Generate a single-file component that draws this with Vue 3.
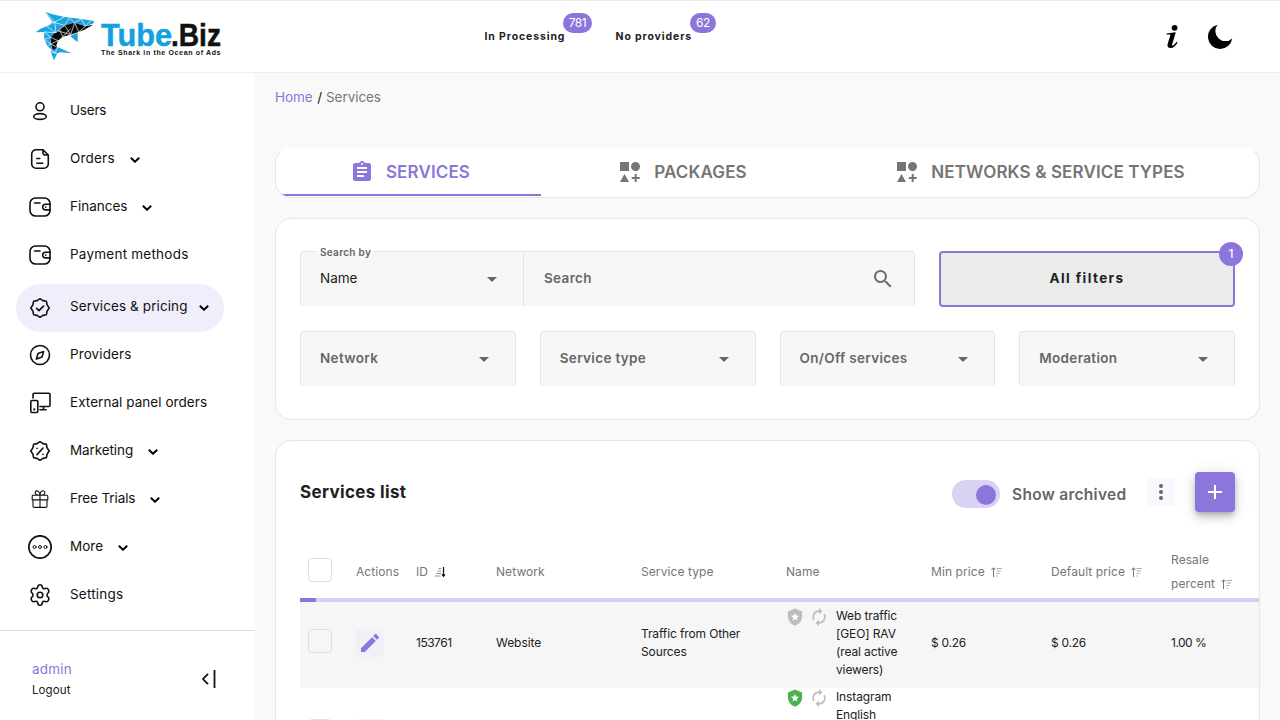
<script setup>
const nav = [
  { label: 'Users', icon: 'user', cls: 'n-users' },
  { label: 'Orders', icon: 'doc', more: true, cls: 'n-orders' },
  { label: 'Finances', icon: 'wallet', more: true, cls: 'n-fin' },
  { label: 'Payment methods', icon: 'wallet', cls: 'n-pay' },
  { label: 'Services & pricing', icon: 'check', more: true, active: true, cls: 'n-serv' },
  { label: 'Providers', icon: 'compass', cls: 'n-prov' },
  { label: 'External panel orders', icon: 'devices', cls: 'n-ext' },
  { label: 'Marketing', icon: 'percent', more: true, cls: 'n-mark' },
  { label: 'Free Trials', icon: 'gift', more: true, cls: 'n-free' },
  { label: 'More', icon: 'dots', more: true, cls: 'n-more' },
  { label: 'Settings', icon: 'gear', cls: 'n-set' },
]
const filters = ['Network', 'Service type', 'On/Off services', 'Moderation']
const columns = [
  { label: 'Actions' },
  { label: 'ID', sort: 'desc' },
  { label: 'Network' },
  { label: 'Service type' },
  { label: 'Name' },
  { label: 'Min price', sort: 'asc' },
  { label: 'Default price', sort: 'asc' },
  { label: 'Resale percent', sort: 'asc' },
]
const rows = [
  { id: '153761', network: 'Website', type: 'Traffic from Other Sources', name: ['Web traffic', '[GEO] RAV', '(real active', 'viewers)'], min: '$ 0.26', def: '$ 0.26', resale: '1.00 %', ok: false },
  { id: '', network: '', type: '', name: ['Instagram', 'English', '', '', ''], min: '', def: '', resale: '', ok: true },
]
const badge = 'M12 2.700L14.900 4.600L18.400 5.300L19.100 8.900L21.200 12L19.100 15.100L18.400 18.700L14.900 19.400L12 21.300L9.100 19.400L5.600 18.700L4.900 15.100L2.800 12L4.900 8.900L5.600 5.300L9.100 4.600Z'
</script>

<template>
  <div class="page">
    <header class="top">
      <svg class="logo" viewBox="0 0 200 60" width="200" height="60">
        <g transform="translate(-16 -4) scale(.33333)">
          <g fill="#1ba3e2">
            <path d="M75 36L98 43L133 51L180 56L222 63L221 70L196 79L164 68L134 76L108 98L92 112L92 132L97 151L82 138L73 118L72 96L47 97L62 86L80 79L98 66Z" />
            <path d="M96 149L114 142L155 160L121 157L112 160L102 181L92 156Z" />
            <path d="M150 108L173 98L173 127Z" />
          </g>
          <path fill="#0a0a0a" d="M98 106L112 92L134 76L164 68L196 79L220 74L192 90L156 103L128 110L114 122L109 136L112 143L98 150L93 132L92 112Z" />
          <path stroke="#fff" stroke-width="2" fill="none" d="M76 37L104 66L133 51M98 66L134 76L148 54M104 66L80 79L108 98L104 66M134 76L108 98L72 96L92 112L73 118L92 132L82 138M164 68L148 54M164 68L184 57L196 79L212 62M134 76L152 104L164 68L176 96L196 79M118 88L128 110M92 112L114 122L93 132L112 143M96 149L104 160L114 142M92 156L112 160M152 104L112 92M152 86L128 110" />
        </g>
        <g class="brand" font-size="32" stroke-width=".5">
          <text x="65" y="42" fill="#12a0e0" stroke="#12a0e0" textLength="71" lengthAdjust="spacingAndGlyphs">Tube</text>
          <text x="135" y="42" fill="#111" stroke="#111" textLength="50" lengthAdjust="spacingAndGlyphs">.Biz</text>
        </g>
        <text x="65" y="51.300" font-size="7" class="brand" fill="#111" textLength="119.500">The Shark in the Ocean of Ads</text>
      </svg>
      <div class="stat s1"><span>In Processing</span><b>781</b></div>
      <div class="stat s2"><span>No providers</span><b>62</b></div>
      <div class="tools">
        <svg viewBox="0 0 16 26" width="16" height="26"><circle cx="9.600" cy="3.800" r="2.900" /><path d="M1.500 9.400L10.800 8.200 7.200 20.200c-.4 1.500.5 1.700 1.600.8l3-3.200.8.7c-2 3.600-4.400 5.500-7 5.500-2.700 0-3.700-1.700-2.900-4.300L5.300 11.500c.3-1-.2-1.200-1.300-1.100l-2.600.2z" /></svg>
        <svg viewBox="0 0 26 26" width="26" height="26"><path d="M10.600.8A12.200 12.200 0 1 0 25.200 14.400 10 10 0 0 1 10.600.8z" /></svg>
      </div>
    </header>

    <div class="body">
      <aside>
        <nav>
          <a v-for="n in nav" :key="n.label" :class="['item', n.cls, { active: n.active }]">
            <svg class="ni" viewBox="0 0 24 24" width="24" height="24" fill="none" stroke="#111" stroke-width="1.600" stroke-linecap="round" stroke-linejoin="round">
              <template v-if="n.icon === 'user'"><circle cx="12" cy="7.800" r="4" /><ellipse cx="12" cy="17.500" rx="6.300" ry="2.900" /></template>
              <template v-else-if="n.icon === 'doc'"><path d="M15 2.700H8A4.300 4.300 0 0 0 3.700 7v10A4.300 4.300 0 0 0 8 21.300h8a4.300 4.300 0 0 0 4.300-4.300V8L15 2.700zM15 3v2.700A2.300 2.300 0 0 0 17.300 8h2.800M8.800 11.500h3M8.800 16.300h6" /></template>
              <template v-else-if="n.icon === 'wallet'"><rect x="2" y="3" width="20" height="18" rx="5.500" /><path d="M6.500 8H12M22 9.300h-4.500a2.800 2.800 0 0 0 0 5.600H22M17.600 12.100h.2" /></template>
              <template v-else-if="n.icon === 'check'"><path :d="badge" /><path d="M8.600 12.300l2.400 2.300 4.500-4.500" /></template>
              <template v-else-if="n.icon === 'compass'"><circle cx="12" cy="12" r="9.500" /><path d="M15.600 8.500l-1.500 5.400-5.700 2.200 1.600-5.600z" /></template>
              <template v-else-if="n.icon === 'devices'"><path d="M5 7V3.500A1.200 1.200 0 0 1 6.200 2.300h14.600A1.200 1.200 0 0 1 22 3.500v10.800a1.200 1.200 0 0 1-1.200 1.200H12M15.500 15.500v3.300M12 18.800h6" /><rect x="2.800" y="9.500" width="7" height="12" rx="1" /><path d="M6.300 18.300v.1" stroke-width="2.200" /></template>
              <template v-else-if="n.icon === 'percent'"><path :d="badge" /><path d="M15 9l-6 6.600M9 9.300v.1M15 15.300v.1" /></template>
              <g v-else-if="n.icon === 'gift'" stroke-width="1.100"><path d="M5 8.300h14a.8.8 0 0 1 .8.800v3.800H4.200V9.100A.8.800 0 0 1 5 8.300zM5 12.900h14v6.300a1.200 1.200 0 0 1-1.200 1.200H6.200A1.200 1.200 0 0 1 5 19.200zM12 8.300v12M12 8.300C8.500 8.300 6.500 7 7.300 5c1-2 4.500-1.300 4.700 3.300 0-5 3.700-5.300 4.700-3.300.8 2-1.200 3.300-4.700 3.300" /></g>
              <template v-else-if="n.icon === 'dots'"><circle cx="12" cy="12" r="11.200" stroke-width="1.700" /><g stroke-width="1"><circle cx="6.500" cy="12" r="1.500" /><circle cx="12" cy="12" r="1.500" /><circle cx="17.500" cy="12" r="1.500" /></g></template>
              <template v-else><path d="M9.800 3.900a2.200 2.200 0 0 1 4.400 0c.2 1.500 1.500 2.200 3 1.600 1.200-.5 2.400-.2 3 .8l.5 1c.6 1.100.2 2-.8 2.800-1.200 1-1.200 2.800 0 3.800 1 .8 1.400 1.700.8 2.800l-.5 1c-.6 1-1.800 1.300-3 .8-1.500-.6-2.800.1-3 1.600a2.200 2.200 0 0 1-4.400 0c-.2-1.500-1.500-2.200-3-1.600-1.200.5-2.400.2-3-.8l-.5-1c-.6-1.100-.2-2 .8-2.800 1.200-1 1.200-2.800 0-3.800-1-.8-1.400-1.700-.8-2.800l.5-1c.6-1 1.800-1.300 3-.8 1.500.6 2.800-.1 3-1.600z" /><circle cx="12" cy="12" r="2.800" /></template>
            </svg>
            <span class="nl">{{ n.label }}</span>
            <svg v-if="n.more" class="chev" viewBox="0 0 10 6" width="10" height="6"><path d="M.8.800L5 4.800 9.200.8" fill="none" stroke="#000" stroke-width="1.900" /></svg>
          </a>
        </nav>
        <div class="account">
          <div><div class="admin">admin</div><div class="logout">Logout</div></div>
          <svg viewBox="0 0 16 20" width="16" height="20" fill="none" stroke="#111" stroke-width="1.800"><path d="M8 4.800L3 10l5 5.200M14.500 1v18" /></svg>
        </div>
      </aside>

      <main>
        <div class="crumbs"><a>Home</a><i>/</i><span>Services</span></div>

        <section class="card tabs">
          <div class="tab on">
            <svg viewBox="0 0 24 24" width="24" height="24" fill="currentColor"><path d="M19 3h-4.200a3 3 0 0 0-5.600 0H5a2 2 0 0 0-2 2v14c0 1.100.9 2 2 2h14a2 2 0 0 0 2-2V5a2 2 0 0 0-2-2zm-7 0a1 1 0 1 1 0 2 1 1 0 0 1 0-2zm2 14H7v-2h7v2zm3-4H7v-2h10v2zm0-4H7V7h10v2z" /></svg>
            <span>SERVICES</span>
          </div>
          <div class="tab">
            <svg viewBox="0 0 24 24" width="24" height="24" fill="currentColor"><path d="M2 2h9v9H2zM17.500 2a4.500 4.500 0 1 1 0 9 4.500 4.500 0 0 1 0-9zM6.500 14l4.500 8H2zM16.700 14h2v3h3v2h-3v3h-2v-3h-3v-2h3z" /></svg>
            <span>PACKAGES</span>
          </div>
          <div class="tab t3">
            <svg viewBox="0 0 24 24" width="24" height="24" fill="currentColor"><path d="M2 2h9v9H2zM17.500 2a4.500 4.500 0 1 1 0 9 4.500 4.500 0 0 1 0-9zM6.500 14l4.500 8H2zM16.700 14h2v3h3v2h-3v3h-2v-3h-3v-2h3z" /></svg>
            <span>NETWORKS &amp; SERVICE TYPES</span>
          </div>
        </section>

        <section class="card filters">
          <div class="frow">
            <div class="search field">
              <div class="by"><label>Search by</label><span>Name</span><i class="caret"></i></div>
              <div class="q"><span>Search</span>
                <svg viewBox="0 0 24 24" width="24" height="24" fill="#6f6f6f"><path d="M15.500 14h-.8l-.3-.3A6.500 6.500 0 1 0 13.700 14.400l.3.300v.8l5 5 1.500-1.500-5-5zm-6 0a4.500 4.500 0 1 1 0-9 4.500 4.500 0 0 1 0 9z" /></svg>
              </div>
            </div>
            <button class="all">All filters<b>1</b></button>
          </div>
          <div class="fgrid">
            <div v-for="f in filters" :key="f" class="field sel"><span>{{ f }}</span><i class="caret"></i></div>
          </div>
        </section>

        <section class="card list">
          <div class="lhead">
            <h2>Services list</h2>
            <span class="toggle"><i></i></span>
            <span class="arch">Show archived</span>
            <span class="kebab"><i></i><i></i><i></i></span>
            <span class="add"><svg viewBox="0 0 24 24" width="24" height="24"><path d="M12 5v14M5 12h14" stroke="#fff" stroke-width="2" /></svg></span>
          </div>
          <div class="grid thead">
            <div><i class="cb"></i></div>
            <div v-for="c in columns" :key="c.label" class="th">
              <p>{{ c.label }}<svg v-if="c.sort" :class="c.sort" viewBox="0 0 12 12" width="12" height="12" fill="none">
                <template v-if="c.sort === 'asc'"><path d="M2.500 11V2M.5 4l2-2.300L4.500 4" stroke="#777" stroke-width="1" /><path d="M5.500 2.500h5.500M5.500 5h4.500M5.500 7.500h3M5.500 10h1.500" stroke="#999" stroke-width=".8" /></template>
                <template v-else><path d="M9.500 1V10M7.900 8.300l1.600 2 1.600-2" stroke="#111" stroke-width="1.200" /><path d="M4.500 2.500H7M3.500 5H7M2 7.500h5M1 10H6.500" stroke="#777" stroke-width=".8" /></template>
              </svg></p>
            </div>
          </div>
          <div class="rows">
            <div class="progress"><i></i></div>
            <div v-for="(r, i) in rows" :key="i" :class="['grid', 'row', { alt: i === 0 }]">
              <div><i class="cb"></i></div>
              <div><span class="edit"><svg viewBox="0 0 24 24" width="24" height="24" fill="#8c76dc"><path d="M3 17.250V21h3.750L17.810 9.940l-3.750-3.750L3 17.250zM20.710 7.040a1 1 0 0 0 0-1.410l-2.340-2.340a1 1 0 0 0-1.410 0l-1.830 1.830 3.750 3.750 1.830-1.830z" /></svg></span></div>
              <div class="num">{{ r.id }}</div>
              <div>{{ r.network }}</div>
              <div class="type">{{ r.type }}</div>
              <div class="name">
                <svg viewBox="0 0 24 24" width="18" height="18" :fill="r.ok ? '#4caf50' : '#bdbdbd'"><path d="M12 .8L2.500 4.800V11c0 5.700 4 10.900 9.500 12.300C17.500 21.900 21.500 16.700 21.500 11V4.800z" /><path fill="#fff" d="M12 6.500l1.500 3.600 3.900.3-3 2.500.9 3.800L12 14.700l-3.300 2 .9-3.800-3-2.500 3.900-.3z" /></svg>
                <svg viewBox="0 0 24 24" width="20" height="20" fill="#bdbdbd"><path d="M12 6v3l4-4-4-4v3a8 8 0 0 0-6.760 12.260L6.700 14.800A6 6 0 0 1 12 6zm6.760 1.740L17.300 9.200A6 6 0 0 1 12 18v-3l-4 4 4 4v-3a8 8 0 0 0 6.760-12.260z" /></svg>
                <p><span v-for="(l, j) in r.name" :key="j">{{ l }}</span></p>
              </div>
              <div class="price">{{ r.min }}</div>
              <div class="price">{{ r.def }}</div>
              <div class="price pct">{{ r.resale }}</div>
            </div>
          </div>
        </section>
      </main>
    </div>
  </div>
</template>

<style>
html, body { margin: 0; overflow: hidden; background: #f9f9f9; }
</style>

<style scoped>
* { box-sizing: border-box; }
i, b { font-style: normal; }
svg { display: block; flex: none; }
.page { width: 1280px; height: 720px; overflow: hidden; display: flex; flex-direction: column; font-family: Inter, "Liberation Sans", sans-serif; color: #212121; background: #f9f9f9; }
.top { height: 73px; flex: none; background: #fff; border-top: 1px solid #ebebeb; border-bottom: 1px solid #eee; display: flex; align-items: flex-start; padding: 0 47px 0 36px; }
.logo { margin-top: 3px; }
.brand { font-family: "Liberation Sans", sans-serif; font-weight: 700; }
.stat { position: relative; margin-top: 28px; font-size: 10.500px; line-height: 16px; font-weight: 700; letter-spacing: .88px; white-space: nowrap; }
.s1 { margin-left: 248.500px; width: 131px; }
.stat b { position: absolute; top: -16px; height: 20px; line-height: 20px; border-radius: 10px; background: #8c76dc; color: #fff; font-weight: 400; font-size: 12px; letter-spacing: -.4px; text-align: center; }
.s1 b { left: 78.500px; width: 29px; }
.s2 b { left: 74.500px; width: 26px; }
.tools { margin-left: auto; margin-top: 23px; display: flex; gap: 26px; }
.body { flex: 1; min-height: 0; display: flex; }
aside { width: 255px; flex: none; background: #fff; display: flex; flex-direction: column; }
nav { padding: 15px 31px 0 16px; height: 557px; }
.item { height: 48px; display: flex; align-items: center; padding-left: 12px; border-radius: 24px; color: #111; }
.active { background: #f1eefc; margin-top: 4px; }
.ni { margin-right: 18px; margin-top: -2px; }
.active .ni { margin-top: 0; }
.nl { font-size: 13.500px; line-height: 20px; margin-top: -4px; white-space: nowrap; letter-spacing: -.1px; }
.n-users .nl { letter-spacing: -.2px; }
.n-orders .nl { letter-spacing: .2px; }
.n-fin .nl { letter-spacing: 0; }
.n-pay .nl { letter-spacing: .23px; }
.n-serv .nl { letter-spacing: .1px; }
.n-prov .nl { letter-spacing: .1px; }
.n-ext .nl { letter-spacing: .05px; }
.n-more .nl { letter-spacing: 0; }
.n-set .nl { letter-spacing: .2px; }
.chev { margin: 0 0 0 15px; }
.active .chev { margin-left: 11px; }
.account { border-top: 1px solid #ddd; flex: 1; display: flex; justify-content: space-between; align-items: flex-start; padding: 26px 39px 0 32px; }
.admin { color: #8c76dc; font-size: 13.500px; line-height: 24px; letter-spacing: .2px; }
.logout { margin-top: 1px; font-size: 11.500px; line-height: 16px; letter-spacing: .1px; }
.account svg { margin-top: 12px; }
main { flex: 1; min-width: 0; padding: 0 20px; }
.crumbs { display: flex; margin-top: 14px; height: 20px; font-size: 13.500px; line-height: 20px; letter-spacing: -.05px; color: #777; }
.crumbs a { color: #8c76dc; }
.crumbs i { margin: 0 4px 0 4.500px; color: #111; }
.card { background: #fff; border: 1px solid #e6e6ec; border-radius: 16px; }
.tabs { margin-top: 40px; height: 51px; display: grid; grid-template-columns: 265px 283px 1fr; overflow: hidden; border-top-color: #fbfbfb; }
.tab { display: flex; align-items: center; justify-content: center; gap: 12px; color: #757575; font-weight: 600; font-size: 17px; letter-spacing: .13px; height: 48px; }
.tab.on { color: #8c76dc; border-bottom: 2px solid #8c76dc; padding: 2px 0 0 3px; }
.t3 { padding-right: 3px; }
.filters { margin-top: 20px; height: 202px; padding: 32px 24px 0; }
.frow { display: flex; gap: 24px; height: 56px; }
.field { background: #f7f7f7; border: 1px solid #e3e3e3; border-bottom: 0; border-radius: 4px; height: 55px; display: flex; font-size: 13.500px; font-weight: 600; letter-spacing: .33px; color: #666; }
.field span { position: relative; top: -1px; }
.search { width: 615px; }
.by { width: 223px; border-right: 1px solid #e3e3e3; position: relative; display: flex; align-items: center; justify-content: space-between; padding: 0 26px 0 19px; color: #212121; font-weight: 400; letter-spacing: 0; }
.by label { position: absolute; left: 16px; top: -8px; padding: 0 3px; height: 14px; line-height: 16px; font-size: 10px; font-weight: 600; letter-spacing: .3px; color: #666; background: linear-gradient(#fff 55%, #f7f7f7 55%); }
.q { flex: 1; display: flex; align-items: center; justify-content: space-between; padding: 0 19px 0 20px; }
.caret { width: 0; height: 0; border: 5px solid transparent; border-top-color: #666; border-bottom: 0; margin-top: 1px; }
.all { position: relative; width: 296px; height: 56px; padding: 0 0 2px; border: 2px solid #8c76dc; border-radius: 4px; background: #ebebeb; font-family: inherit; font-size: 13.500px; font-weight: 700; letter-spacing: 1.400px; color: #212121; }
.all b { position: absolute; right: -10px; top: -11px; width: 24px; height: 24px; border-radius: 12px; background: #8c76dc; color: #fff; font-size: 12px; font-weight: 500; line-height: 24px; letter-spacing: 0; }
.fgrid { margin-top: 24px; display: grid; grid-template-columns: repeat(4, 1fr); gap: 24px; }
.sel { align-items: center; justify-content: space-between; padding: 0 26px 0 19px; }
.list { margin-top: 20px; height: 400px; border-radius: 16px 16px 0 0; overflow: hidden; padding-left: 24px; }
.lhead { height: 104px; padding: 31px 24px 0 0; display: flex; align-items: flex-start; }
h2 { margin: 8px auto 0 0; font-size: 17px; line-height: 24px; font-weight: 700; letter-spacing: .35px; }
.toggle { width: 48px; height: 28px; border-radius: 14px; background: #d9d2f3; margin-top: 8px; padding: 5px 4px; display: flex; justify-content: flex-end; }
.toggle i { width: 20px; height: 20px; border-radius: 50%; background: #8c76dc; }
.arch { margin-left: 12px; width: 115px; margin-top: 13px; line-height: 20px; font-size: 15.500px; font-weight: 600; letter-spacing: .3px; color: #666; white-space: nowrap; }
.kebab { margin: 6px 20px 0; width: 28px; height: 28px; border-radius: 4px; background: #f9f8fe; display: flex; flex-direction: column; align-items: center; justify-content: center; gap: 2px; }
.kebab i { width: 4px; height: 4px; border-radius: 50%; background: #666; }
.add { width: 40px; height: 40px; border-radius: 4px; background: #8c76dc; display: grid; place-items: center; box-shadow: 0 3px 5px -1px rgba(0,0,0,.2), 0 6px 10px rgba(0,0,0,.14), 0 1px 18px rgba(0,0,0,.1); }
.grid { display: grid; grid-template-columns: 48px 60px 80px 145px 145px 145px 120px 120px 1fr; font-size: 12px; line-height: 18px; letter-spacing: -.05px; }
.grid > div { padding: 0 8px; display: flex; align-items: center; }
.thead { height: 53px; color: #757575; line-height: 24px; align-items: center; letter-spacing: .08px; }
.th p { margin: 0; }
.th svg { display: inline-block; margin-left: 6px; vertical-align: -2px; }
.cb { width: 24px; height: 24px; flex: none; border: 1px solid #dedee4; border-radius: 4px; margin-top: -4px; }
.rows { position: relative; }
.progress { position: absolute; inset: 0 0 auto; height: 4px; background: #d5cef0; }
.progress i { display: block; width: 16px; height: 4px; background: #8c76dc; }
.row { height: 90px; }
.alt { background: #f6f6f6; }
.edit { width: 28px; height: 28px; border-radius: 4px; background: #f1f0f8; display: grid; place-items: center; }
.num { letter-spacing: -.5px; }
.type { letter-spacing: -.12px; }
.price { letter-spacing: -.25px; }
.pct { letter-spacing: -.5px; }
.name p { margin: 0; }
.name p span { display: block; height: 18px; }
.grid > .name { align-items: flex-start; padding-top: 9px; white-space: nowrap; letter-spacing: -.12px; }
.grid.row:not(.alt) > .name { padding-top: 0; }
.name svg:first-child { margin: 1px 5px 0 0; }
.name svg + svg { margin: 0 7px 0 0; }
</style>
